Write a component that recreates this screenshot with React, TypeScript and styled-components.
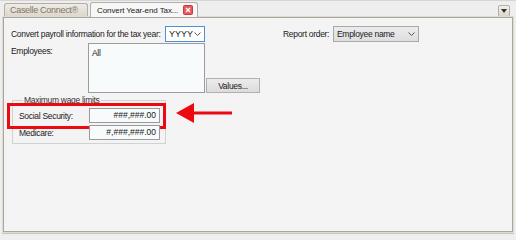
import React from "react";
import styled, { createGlobalStyle } from "styled-components";

const GlobalStyle = createGlobalStyle`
    html, body {
        margin: 0;
        padding: 0;
        background: #efefef;
    }
    body {
        font-family: "Liberation Sans", Arial, sans-serif;
        font-size: 8.5px;
        letter-spacing: -0.3px;
        color: #1a1a1a;
    }
`;

const Window = styled.div`
    width: 516px;
    height: 236px;
    box-sizing: border-box;
    display: flex;
    flex-direction: column;
    background: #eeeeee;
    border-top: 1px solid #d6d6d6;
    overflow: hidden;
`;

const TabStrip = styled.div`
    height: 15px;
    display: flex;
    align-items: flex-end;
    padding: 0 6px 0 4px;
    gap: 2px;
`;

const Tab = styled.div<{ $active?: boolean }>`
    height: ${(p) => (p.$active ? 15 : 13)}px;
    box-sizing: border-box;
    display: flex;
    align-items: center;
    justify-content: space-between;
    padding: 0 4px 0 ${(p) => (p.$active ? 6 : 5)}px;
    border: 1px solid #b3aea6;
    border-bottom: none;
    border-radius: 3px 3px 0 0;
    background: ${(p) =>
        p.$active
            ? "#f7f7f7"
            : "linear-gradient(#efebe4, #ddd7cd)"};
    color: ${(p) => (p.$active ? "#1a1a1a" : "#7b756b")};
    font-size: ${(p) => (p.$active ? 8 : 9)}px;
    letter-spacing: ${(p) => (p.$active ? -0.1 : -0.3)}px;
    width: ${(p) => (p.$active ? 108 : 84)}px;
    margin-bottom: ${(p) => (p.$active ? -1 : 0)}px;
    position: relative;
    white-space: nowrap;
`;

const CloseIcon = styled.span`
    width: 10px;
    height: 10px;
    flex-shrink: 0;
    display: flex;
`;

const MenuButton = styled.div`
    margin-left: auto;
    margin-bottom: -1px;
    width: 12px;
    height: 12px;
    box-sizing: border-box;
    border: 1px solid #b5b0a6;
    border-radius: 2px;
    background: linear-gradient(#f3efe8, #ddd6ca);
    display: flex;
    align-items: center;
    justify-content: center;
`;

const Panel = styled.div`
    flex: 1;
    margin: 1px 3px 4px 3px;
    border: 1px solid #aaa59d;
    box-shadow: 0 0 0 1px #dedad4, 0 1px 0 1px #c9c5bf;
    background-color: #f4f4f4;
    background-image: repeating-conic-gradient(#f6f6f6 0 25%, #f1f1f1 0 50%);
    background-size: 2px 2px;
    padding: 8px 0 0 7px;
    display: flex;
    flex-direction: column;
`;

const Row = styled.div`
    display: flex;
    align-items: center;
`;

const Label = styled.span<{ $w: number; $gap?: number }>`
    width: ${(p) => p.$w}px;
    margin-left: ${(p) => p.$gap ?? 0}px;
    flex-shrink: 0;
    white-space: nowrap;
`;

const Select = styled.div<{ $w: number; $focused?: boolean }>`
    width: ${(p) => p.$w}px;
    height: 16px;
    box-sizing: border-box;
    display: flex;
    align-items: center;
    justify-content: space-between;
    padding: 0 3px 0 3px;
    border: 1px solid ${(p) => (p.$focused ? "#4d90d6" : "#a9a9a9")};
    background: ${(p) => (p.$focused ? "#ffffff" : "linear-gradient(#ececec, #dedede)")};
    font-size: ${(p) => (p.$focused ? 9 : 8.5)}px;
    letter-spacing: ${(p) => (p.$focused ? 0 : -0.3)}px;
    white-space: nowrap;
`;

const ListRow = styled.div`
    display: flex;
    align-items: flex-start;
    margin-top: 1px;
`;

const EmployeesLabel = styled(Label)`
    padding-top: 3px;
`;

const ListBox = styled.div`
    width: 117px;
    height: 50px;
    box-sizing: border-box;
    border: 1px solid #9c9c9c;
    background: #f8fbfc;
    padding: 4px 3px;
`;

const Button = styled.div`
    align-self: flex-end;
    width: 54px;
    height: 15px;
    box-sizing: border-box;
    margin-left: 1px;
    border: 1px solid #b0b0b0;
    background: linear-gradient(#ececec, #dcdcdc);
    display: flex;
    align-items: center;
    justify-content: center;
`;

const Group = styled.fieldset`
    width: 154px;
    box-sizing: border-box;
    margin: 3px 0 0 1px;
    padding: 4px 0 3px 6px;
    border: 1px solid #d2d2d2;
    display: flex;
    flex-direction: column;
    gap: 2px;
`;

const Legend = styled.legend`
    padding: 0 1px;
    margin-left: 4px;
    color: #333;
    line-height: 8px;
`;

const FieldRow = styled.div`
    position: relative;
    display: flex;
    align-items: center;
`;

const NumberInput = styled.div`
    width: 71px;
    height: 15px;
    box-sizing: border-box;
    border: 1px solid #9a9a9a;
    background: #f7fbfc;
    text-align: right;
    padding: 0 3px;
    line-height: 13px;
    font-size: 8.5px;
    letter-spacing: 0;
`;

const Highlight = styled.div`
    position: absolute;
    top: -5px;
    bottom: -6px;
    left: -12px;
    right: -1px;
    border: 3px solid #ec0a12;
    pointer-events: none;
`;

const Arrow = styled.svg`
    position: absolute;
    left: calc(100% + 11px);
    top: -6px;
`;

const CloseGlyph = () => (
    <svg width="10" height="10" viewBox="0 0 10 10">
        <rect x="0.5" y="0.5" width="9" height="9" rx="1" fill="#e9585b" stroke="#c73b3e" />
        <path d="M3 3 L7 7 M7 3 L3 7" stroke="#fff" strokeWidth="1.4" />
    </svg>
);

const Chevron = () => (
    <svg width="7" height="4" viewBox="0 0 7 4">
        <path d="M0.5 0.5 L3.5 3.5 L6.5 0.5" fill="none" stroke="#555" strokeWidth="1" />
    </svg>
);

export default function App() {
    return (
        <>
            <GlobalStyle />
            <Window>
                <TabStrip>
                    <Tab>Caselle Connect®</Tab>
                    <Tab $active>
                        Convert Year-end Tax...
                        <CloseIcon>
                            <CloseGlyph />
                        </CloseIcon>
                    </Tab>
                    <MenuButton>
                        <svg width="6" height="4" viewBox="0 0 6 4">
                            <path d="M0 0 H6 L3 4 Z" fill="#333" />
                        </svg>
                    </MenuButton>
                </TabStrip>
                <Panel>
                    <Row>
                        <Label $w={154}>Convert payroll information for the tax year:</Label>
                        <Select $w={40} $focused>
                            YYYY <Chevron />
                        </Select>
                        <Label $w={50} $gap={78}>Report order:</Label>
                        <Select $w={86}>
                            Employee name <Chevron />
                        </Select>
                    </Row>
                    <ListRow>
                        <EmployeesLabel $w={77}>Employees:</EmployeesLabel>
                        <ListBox>All</ListBox>
                        <Button>Values...</Button>
                    </ListRow>
                    <Group>
                        <Legend>Maximum wage limits</Legend>
                        <FieldRow>
                            <Label $w={70}>Social Security:</Label>
                            <NumberInput>###,###.00</NumberInput>
                            <Highlight />
                            <Arrow width="56" height="22" viewBox="0 0 56 22">
                                <path d="M0 11 L18 1 L18 21 Z" fill="#ec0a12" />
                                <rect x="16" y="9.5" width="40" height="3" fill="#ec0a12" />
                            </Arrow>
                        </FieldRow>
                        <FieldRow>
                            <Label $w={70}>Medicare:</Label>
                            <NumberInput>#,###,###.00</NumberInput>
                        </FieldRow>
                    </Group>
                </Panel>
            </Window>
        </>
    );
}
